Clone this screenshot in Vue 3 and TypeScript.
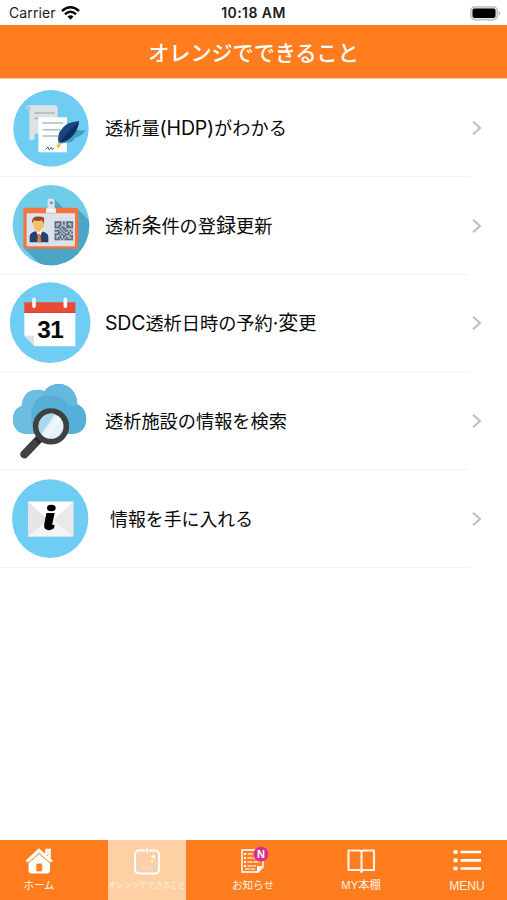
<script setup lang="ts">
interface Piece { text: string; kind?: 'latin' | 'wide' }
interface Row { icon: string; pieces: Piece[]; indent?: boolean }

const rows: Row[] = [
  { icon: 'document', pieces: [{ text: '透析量' }, { text: '(HDP)', kind: 'latin' }, { text: 'がわかる' }] },
  { icon: 'card', pieces: [{ text: '透析' }, { text: '条', kind: 'wide' }, { text: '件の登' }, { text: '録', kind: 'wide' }, { text: '更新' }] },
  { icon: 'calendar', pieces: [{ text: 'SDC', kind: 'latin' }, { text: '透析日時の予約' }, { text: '·', kind: 'latin' }, { text: '変', kind: 'wide' }, { text: '更' }] },
  { icon: 'cloud', pieces: [{ text: '透析施設の情報を検索' }] },
  { icon: 'mail', pieces: [{ text: '情報を手に入れる' }], indent: true },
]

const qr = [
  '11110101111', '10010101001', '10110001101', '11101101111', '00010110000', '11101011010',
  '00110100101', '11101011100', '10010110011', '10110101001', '11101011111',
]
</script>

<template>
  <div class="screen">
    <div class="status">
      <div class="carrier">
        <span>Carrier</span>
        <svg class="wifi" viewBox="0 0 19 14">
          <path d="M1 5Q9.500 -2.400 18 5M4 8.200Q9.500 3.300 15 8.200" fill="none" stroke="#080808" stroke-width="2.500" />
          <path d="M6.500 10.600Q9.500 8 12.500 10.600L9.500 13.700Z" fill="#080808" />
        </svg>
      </div>
      <div class="time">10:18 AM</div>
      <svg class="battery" viewBox="0 0 31 15">
        <rect x=".8" y=".8" width="26.500" height="13" rx="4" fill="#e5e5e5" stroke="#bababa" stroke-width="1.200" />
        <rect x="2.500" y="2.500" width="23" height="9.600" rx="2" fill="#000" />
        <path d="M28.700 5Q31.500 7.300 28.700 9.700Z" fill="#aaa" />
      </svg>
    </div>

    <header class="title">オレンジでできること</header>

    <main class="list">
      <div v-for="row in rows" :key="row.icon" class="row">
        <svg v-if="row.icon === 'document'" class="picture" viewBox="0 -4 300 293">
          <ellipse cx="153" cy="144" rx="113" ry="115" fill="#6fccf2" />
          <path d="M83 75H166Q173 77 173 84V160H104V174Q99 184 88 177V93Q86 83 77 82Q78 76 83 75Z" fill="#dce3e3" />
          <path d="M76 82Q77 74 88 75Q94 80 91 91Q84 94 76 82Z" fill="#b7cdd4" />
          <path d="M103 98H165M103 114H115" stroke="#aabbbc" stroke-width="5" />
          <path d="M115 111H201V216H115Z" fill="#fcfefe" />
          <path d="M128 128H190M128 148H181M128 167H174" stroke="#a9bfc1" stroke-width="4.500" />
          <path d="M137 207L144 200L148 209L154 201L157 207L162 204" fill="none" stroke="#576267" stroke-width="3" />
          <path d="M180 190Q188 158 222 148L256 151Q245 166 228 171L214 185Z" fill="#479cc3" />
          <path d="M174 183Q171 151 202 130Q219 124 238 122Q233 154 213 172Q199 184 182 186Z" fill="#174681" />
          <path d="M175 188Q198 154 236 124Q231 154 213 170Q197 184 175 188Z" fill="#0d2f62" />
          <path d="M177 186Q197 157 230 129" fill="none" stroke="#315f91" stroke-width="1.500" />
          <path d="M169 196L176 187L184 193L174 205Z" fill="#edc04e" />
        </svg>

        <svg v-else-if="row.icon === 'card'" class="picture" viewBox="0 -1 300 293">
          <defs><clipPath id="card-disc"><ellipse cx="153" cy="143.500" rx="115" ry="120.500" /></clipPath></defs>
          <ellipse cx="153" cy="143.500" rx="115" ry="120.500" fill="#70cdea" />
          <path clip-path="url(#card-disc)" d="M164 66L192 95H233L290 152V280H139L72 213Z" fill="#4ba5c5" />
          <rect x="70" y="91" width="165" height="123" rx="6" fill="#f4743f" />
          <rect x="80" y="108" width="145" height="99" rx="2" fill="#dce2e8" />
          <path d="M89 195V177Q90 166 107 162H126Q144 167 145 178V195Z" fill="#24426a" />
          <path d="M108 160L117 183L128 160L124 153H111Z" fill="#fff" />
          <path d="M114 169H120L124 195H111Z" fill="#ed7641" />
          <path d="M99 136Q98 123 108 124H124Q136 127 132 140Q133 150 125 156Q121 167 113 163Q102 157 101 147Z" fill="#f7bf66" />
          <path d="M97 138Q94 122 106 118Q128 117 132 122V139L126 129Q110 133 103 128Z" fill="#944631" />
          <rect x="163" y="131" width="57" height="58" fill="#bdc6d1" />
          <g v-for="(line, y) in qr" :key="y">
            <template v-for="(bit, x) in line" :key="x">
              <rect v-if="bit === '1'" :x="164 + x * 5" :y="132 + y * 5.15" width="5" height="5.2" fill="#53657e" />
            </template>
          </g>
          <path d="M143 68Q144 64 149 64H158Q164 65 164 72V92Q169 94 168 106H138V94L143 91Z" fill="#dae3e8" />
          <path d="M138 94H168V106H138Z" fill="#edf2f4" />
          <circle cx="154" cy="76" r="4.500" fill="#609eb2" />
        </svg>

        <svg v-else-if="row.icon === 'calendar'" class="picture" viewBox="0 1 300 293">
          <circle cx="150.500" cy="147" r="121" fill="#6fcdf3" />
          <path d="M73 118H226V218H105L73 186Z" fill="#fff" />
          <path d="M73 186H102V217Z" fill="#dce1e5" />
          <path d="M73 86H226V118H73Z" fill="#eb4b34" />
          <path d="M73 116H226" stroke="#d43e2e" stroke-width="3" />
          <path d="M102 77V98M196 77V98" stroke="#f5f7f8" stroke-width="11" stroke-linecap="round" />
          <text x="151" y="193" text-anchor="middle" class="date">31</text>
        </svg>

        <svg v-else-if="row.icon === 'cloud'" class="picture" viewBox="0 0 300 293">
          <path d="M80 186C54 186 39 166 39 142C39 120 50 107 65 102C67 73 84 54 106 54Q123 52 134 58C143 43 159 36 176 36C207 36 229 59 232 97C249 103 259 120 259 141C259 169 242 186 216 186Z" fill="#56afd7" />
          <path d="M80 186C54 186 39 166 39 142C39 120 50 107 65 102C67 73 84 54 106 54Q122 53 134 59L125 74Q107 77 99 105Q91 122 94 145Q97 173 108 186Z" fill="#6dbde0" />
          <path d="M134 58C143 43 159 36 176 36C207 36 229 59 232 91L224 105Q213 99 203 101Q197 81 181 79Q154 65 127 72Z" fill="#64b8dd" />
          <path d="M73 247L121 197" stroke="#414142" stroke-width="25" stroke-linecap="round" />
          <path d="M104 202L117 190L131 205L116 217Z" fill="#29292a" />
          <circle cx="153" cy="163" r="46" fill="#e3f3fa" stroke="#404041" stroke-width="17" />
          <path d="M116 165Q116 143 131 132Q146 120 165 126L124 187Q116 177 116 165Z" fill="#a8d8ed" />
          <path d="M174 132L130 192L140 198L184 142Z" fill="#f0f8fb" />
        </svg>

        <svg v-else class="picture" viewBox="0 0 300 293">
          <ellipse cx="150.500" cy="146" rx="114.500" ry="118" fill="#6fccf2" />
          <rect x="84" y="95" width="136" height="105" fill="#f4f4f5" />
          <path d="M84 95L145 148L84 200Z" fill="#e5e5e7" />
          <path d="M220 95L158 148L220 200Z" fill="#e9e9eb" />
          <path d="M84 95H220L152 157Z" fill="#fff" />
          <ellipse cx="154" cy="114" rx="13" ry="10" fill="#000" />
          <path d="M139 129H164L157 161Q156 167 164 164L162 175Q154 182 143 180Q129 177 133 162L137 140Z" fill="#000" />
        </svg>

        <div class="label" :class="{ indent: row.indent }">
          <span v-for="(piece, index) in row.pieces" :key="index" :class="piece.kind">{{ piece.text }}</span>
        </div>
        <svg class="arrow" viewBox="0 0 12 16"><path d="M2 1.700L9 8L2 14.300" fill="none" stroke="#bfbfbf" stroke-width="2" /></svg>
      </div>
    </main>

    <nav class="tabs">
      <div class="tab home">
        <svg class="tab-icon" viewBox="0 0 30 30">
          <path d="M4.500 15V24Q4.500 27.500 7.500 27.500H22.500Q26 27.500 26 24V14L15 6Z" fill="#fff" />
          <path d="M2.500 15.500L15 4L28 15.500M22.500 9V4H25.500V12" fill="none" stroke="#fff" stroke-width="2.600" />
          <path d="M4.500 17L15 7.500L26 17" fill="none" stroke="#ff7d1e" stroke-width="1" />
          <rect x="12.200" y="17.500" width="6" height="8" rx="1" fill="#ff7d1e" stroke="#ffd5b5" stroke-width=".6" />
        </svg>
        <span>ホーム</span>
      </div>
      <div class="tab active">
        <svg class="tab-icon" viewBox="0 0 30 30">
          <rect x="3" y="4.500" width="24" height="23" rx="4" fill="none" stroke="#fff" stroke-width="2" />
          <path d="M15 2V7" stroke="#ffd1a5" stroke-width="4" />
          <path d="M15 2V6.500" stroke="#fff" stroke-width="1.700" />
          <path d="M6 24L11.500 15L16 22L19 18L24 24" fill="#fed4ad" stroke="#ecd1bd" stroke-width="1.500" stroke-dasharray="2 .7" />
          <circle cx="21.500" cy="10.500" r="1.700" fill="#fff" />
          <circle cx="20" cy="15" r="1" fill="#fff" />
          <path d="M5.800 7.500V25H24.800" fill="none" stroke="#eacdb9" stroke-width=".8" />
        </svg>
        <span>オレンジでできること</span>
      </div>
      <div class="tab news">
        <svg class="tab-icon" viewBox="0 0 30 30">
          <path d="M4 4H25V21L20 26H4Z" fill="none" stroke="#ffe8d7" stroke-width="1.800" />
          <path d="M19 26V20H25Z" fill="#fff" />
          <path d="M6 8H8M6 12H8M6 16H8M6 20H8" stroke="#fff" stroke-width="2" />
          <path d="M9.500 8H19M9.500 12H20M9.500 16H22M9.500 20H18M7 23H17" stroke="#ffe5cf" stroke-width="1.500" stroke-dasharray="5 .8" />
          <circle cx="23" cy="8" r="7.500" fill="#d82d94" />
          <text x="23" y="11.800" text-anchor="middle" class="badge">N</text>
        </svg>
        <span>お知らせ</span>
      </div>
      <div class="tab books">
        <svg class="tab-icon" viewBox="0 0 30 30">
          <path d="M2.500 4.500H13Q15 4.500 15.500 6Q16 4.500 18 4.500H28V24H18Q16 24 15.500 26Q15 24 13 24H2.500ZM15.500 6V25" fill="none" stroke="#fff2e7" stroke-width="2.100" stroke-linejoin="round" />
        </svg>
        <span>MY本棚</span>
      </div>
      <div class="tab menu">
        <svg class="tab-icon" viewBox="0 0 30 30">
          <path d="M1.500 6H5.500M1.500 14.300H5.500M1.500 22.500H5.500" stroke="#fff" stroke-width="3.700" />
          <path d="M8.500 6H29M8.500 14.300H29M8.500 22.500H29" stroke="#fff" stroke-width="2.700" />
        </svg>
        <span>MENU</span>
      </div>
    </nav>
  </div>
</template>

<style>
body { margin: 0; background: #fff; }
</style>

<style scoped>
.screen { display: flex; flex-direction: column; width: 507px; height: 900px; overflow: hidden; background: #fff; font-family: Inter, "Noto Sans CJK JP", sans-serif; }
.status { display: grid; grid-template-columns: 1fr 70px 1fr; align-items: center; box-sizing: border-box; height: 25px; padding: 1px 6px 0 9px; color: #202020; }
.carrier { display: flex; align-items: center; gap: 5px; font-size: 14px; letter-spacing: .1px; line-height: 20px; white-space: nowrap; }
.wifi { width: 19px; height: 14px; }
.time { margin-left: -3px; font-size: 14px; font-weight: 600; letter-spacing: .45px; line-height: 20px; text-align: center; white-space: nowrap; }
.battery { justify-self: end; width: 31px; height: 15px; }
.title { box-sizing: border-box; height: 54px; border-bottom: 1px solid #ffc895; background: #ff7d1e; color: #fff; font: 500 21.1px/55px "Noto Sans CJK JP", sans-serif; text-align: center; }
.list { flex: 1; }
.row { display: grid; grid-template-columns: 105px 362px 1fr; align-items: center; height: 97.7px; background: linear-gradient(#f4f4f4, #f4f4f4) 0 calc(100% + .2px) / 469px 1px no-repeat; }
.picture { display: block; width: 100px; height: 97.7px; overflow: visible; }
.label { display: flex; align-items: baseline; height: 28px; padding-bottom: 2px; color: #080808; font: 400 18.2px/28px "Noto Sans CJK JP", sans-serif; white-space: nowrap; }
.indent { padding-left: 5px; font-size: 17.9px; }
.latin { font-family: Inter, sans-serif; font-size: 19.5px; letter-spacing: -.15px; }
.wide { font-size: 20px; }
.arrow { width: 12px; height: 16px; margin-left: 4px; }
.date { fill: #080808; font: 700 73px "Liberation Sans", sans-serif; letter-spacing: -1px; }
.badge { fill: #fff; font: 700 11px "Liberation Sans", sans-serif; }
.tabs { display: grid; grid-template-columns: 78px 108px 134px 82px 105px; justify-content: start; height: 60px; background: #ff7d1e; }
.tab { display: flex; flex-direction: column; align-items: center; box-sizing: border-box; padding-top: 6px; color: #fff1e6; font: 400 11px/14px "Noto Sans CJK JP", sans-serif; white-space: nowrap; }
.tab-icon { display: block; width: 30px; height: 30px; margin-bottom: 2px; }
.home span { font-size: 10.5px; }
.active { width: 78px; margin-left: 30px; background: #ffd0a3; }
.active span { color: #fff0df; font-size: 7.8px; }
.news span { font-size: 10.6px; }
.menu { padding-left: 25px; }
.menu span, .books span { font-family: "Liberation Sans", "Noto Sans CJK JP", sans-serif; }
.menu span { padding-top: 1px; font-size: 12px; }
.books span { font-size: 11.3px; }
</style>
